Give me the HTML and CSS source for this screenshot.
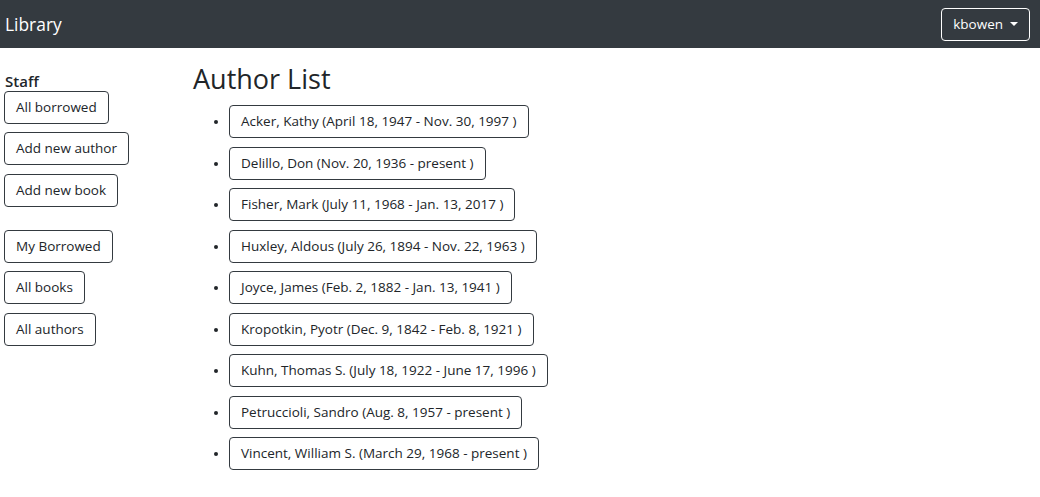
FILE: index.html
```html
<!DOCTYPE html>
<html lang="en">
<head>
<meta charset="utf-8">
<title>Library</title>
<link rel="stylesheet" href="styles.css">
</head>
<body>
<nav class="navbar">
  <a class="brand" href="#">Library</a>
  <button class="user-btn">kbowen <span class="caret"></span></button>
</nav>
<div class="page">
  <aside class="sidebar">
    <div class="side-title">Staff</div>
    <a class="btn" href="#">All borrowed</a>
    <a class="btn" href="#">Add new author</a>
    <a class="btn" href="#">Add new book</a>
    <div class="side-spacer"></div>
    <a class="btn" href="#">My Borrowed</a>
    <a class="btn" href="#">All books</a>
    <a class="btn" href="#">All authors</a>
  </aside>
  <main class="content">
    <h1 class="title">Author List</h1>
    <ul class="author-list">
      <li><a class="btn" href="#">Acker, Kathy (April 18, 1947 - Nov. 30, 1997 )</a></li>
      <li><a class="btn" href="#">Delillo, Don (Nov. 20, 1936 - present )</a></li>
      <li><a class="btn" href="#">Fisher, Mark (July 11, 1968 - Jan. 13, 2017 )</a></li>
      <li><a class="btn" href="#">Huxley, Aldous (July 26, 1894 - Nov. 22, 1963 )</a></li>
      <li><a class="btn" href="#">Joyce, James (Feb. 2, 1882 - Jan. 13, 1941 )</a></li>
      <li><a class="btn" href="#">Kropotkin, Pyotr (Dec. 9, 1842 - Feb. 8, 1921 )</a></li>
      <li><a class="btn" href="#">Kuhn, Thomas S. (July 18, 1922 - June 17, 1996 )</a></li>
      <li><a class="btn" href="#">Petruccioli, Sandro (Aug. 8, 1957 - present )</a></li>
      <li><a class="btn" href="#">Vincent, William S. (March 29, 1968 - present )</a></li>
    </ul>
  </main>
</div>
</body>
</html>
```

FILE: styles.css
```css
* { box-sizing: border-box; }
html, body {
  margin: 0;
  padding: 0;
  font-family: "Open Sans", "Noto Sans", sans-serif;
  color: #212529;
  background: #fff;
}
.navbar {
  height: 48px;
  background: #343a40;
  display: flex;
  align-items: center;
  justify-content: space-between;
  padding: 0 10px 0 5px;
}
.brand {
  color: #fff;
  text-decoration: none;
  font-size: 17.4px;
  line-height: 24px;
}
.user-btn {
  font-family: inherit;
  background: transparent;
  color: #fff;
  border: 1px solid #fff;
  border-radius: 4px;
  font-size: 13.5px;
  line-height: 21px;
  height: 33px;
  padding: 5px 11px;
  display: flex;
  align-items: center;
  gap: 7px;
}
.caret {
  width: 0;
  height: 0;
  border-left: 4px solid transparent;
  border-right: 4px solid transparent;
  border-top: 4px solid #fff;
}
.page {
  display: flex;
}
.sidebar {
  width: 193px;
  flex: none;
  padding: 23px 0 0 4px;
  display: flex;
  flex-direction: column;
  align-items: flex-start;
  gap: 8.7px;
}
.side-title {
  font-size: 15px;
  font-weight: 600;
  line-height: 20px;
  padding-left: 1px;
  margin-bottom: -9px;
}
.side-spacer {
  height: 14px;
  margin-bottom: -8.7px;
}
.btn {
  display: inline-block;
  font-size: 13.5px;
  line-height: 21px;
  padding: 5px 11px;
  border: 1px solid #343a40;
  border-radius: 4px;
  color: #212529;
  text-decoration: none;
  background: #fff;
}
.content {
  flex: 1;
}
.title {
  font-size: 27px;
  font-weight: 400;
  line-height: 34px;
  margin: 14px 0 0 0;
}
.author-list {
  margin: 9px 0 0 0;
  padding-left: 36px;
}
.author-list li {
  font-size: 13.5px;
  margin-bottom: 8.5px;
}
.author-list li::marker {
  font-size: 12px;
}
```
